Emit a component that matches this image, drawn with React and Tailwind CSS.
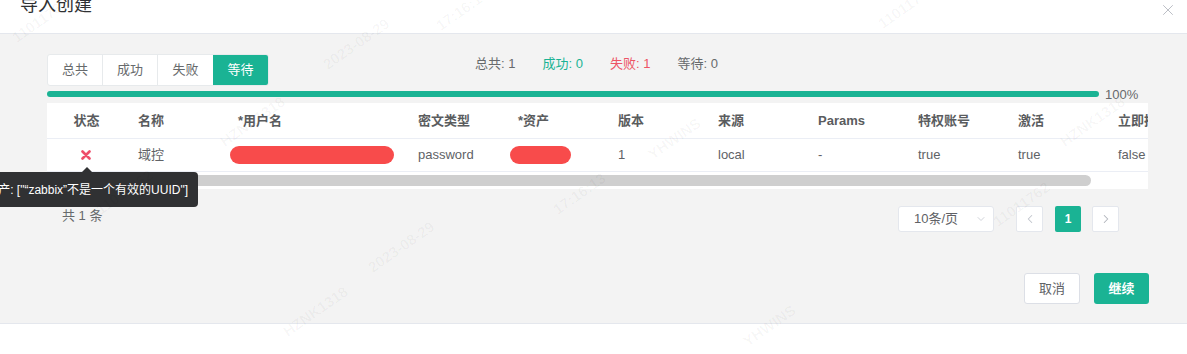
import { X, ChevronDown, ChevronLeft, ChevronRight } from "lucide-react";

const columns = [
  { key: "status", label: "状态", width: 79, center: true },
  { key: "name", label: "名称", width: 100 },
  { key: "username", label: "*用户名", width: 180 },
  { key: "secretType", label: "密文类型", width: 100 },
  { key: "asset", label: "*资产", width: 100 },
  { key: "version", label: "版本", width: 100 },
  { key: "source", label: "来源", width: 100 },
  { key: "params", label: "Params", width: 100 },
  { key: "privileged", label: "特权账号", width: 100 },
  { key: "active", label: "激活", width: 100 },
  { key: "push", label: "立即推送", width: 100 },
];

const row = {
  name: "域控",
  secretType: "password",
  version: "1",
  source: "local",
  params: "-",
  privileged: "true",
  active: "true",
  push: "false",
};

// faint diagonal watermark labels that sit over the dialog
const marks = [
  { t: "11011762", x: 14, y: 28 },
  { t: "2023-08-29", x: 325, y: 55 },
  { t: "17:16:13", x: 438, y: 16 },
  { t: "11011762", x: 880, y: 14 },
  { t: "HZNK1318", x: 222, y: 132 },
  { t: "YHWINS", x: 650, y: 145 },
  { t: "17:16:13", x: 555, y: 200 },
  { t: "11011762", x: 98, y: 200 },
  { t: "2023-08-29", x: 370, y: 258 },
  { t: "HZNK1318", x: 285, y: 322 },
  { t: "11011762", x: 995, y: 212 },
  { t: "HZNK1318", x: 1062, y: 132 },
  { t: "YHWINS", x: 745, y: 332 },
];

function Tabs() {
  const tabs = ["总共", "成功", "失败", "等待"];
  return (
    <div className="flex h-[32px] rounded-[3px] border border-[#e7eaec] bg-white overflow-hidden">
      {tabs.map((t, i) => (
        <div
          key={t}
          className={`w-[55px] flex items-center justify-center text-[13px] ${
            i === 3
              ? "bg-[#1ab394] text-white"
              : "text-[#676a6c] " + (i < 2 ? "border-r border-[#e7eaec]" : "")
          }`}
        >
          {t}
        </div>
      ))}
    </div>
  );
}

function Redacted({ w }) {
  return <div className={`h-[18px] rounded-full bg-[#f84b4b] ${w}`}></div>;
}

function cellPad(c) {
  if (c.center) return "flex justify-center";
  if (c.key === "username" || c.key === "asset") return "pl-[4px]";
  return "pl-[12px]";
}

export default function App() {
  return (
    <div
      className="relative w-[1187px] h-[354px] overflow-hidden bg-white"
      style={{ fontFamily: '"Liberation Sans", "Noto Sans CJK SC", sans-serif' }}
    >
      {/* Header */}
      <div className="h-[34px] border-b border-[#e4e7ed] relative">
        <div className="relative -top-[7px] pl-[20px] text-[18px] leading-[24px] text-[#303133]">
          导入创建
        </div>
        <X
          className="absolute left-[1159px] top-[1px] text-[#b4b8bf]"
          size={18}
          strokeWidth={1.2}
        />
      </div>

      {/* Body */}
      <div className="h-[290px] bg-[#f3f3f3] border-b border-[#e4e7ed] pt-[20px] pl-[47px]">
        <div className="flex items-start">
          <Tabs />
          <div className="ml-[206px] mt-[2px] flex gap-[27px] text-[13px] leading-[16px]">
            <span className="text-[#676a6c]">总共: 1</span>
            <span className="text-[#1ab394]">成功: 0</span>
            <span className="text-[#ed5565]">失败: 1</span>
            <span className="text-[#676a6c]">等待: 0</span>
          </div>
        </div>

        {/* Progress */}
        <div className="mt-[5px] flex items-center h-[6px]">
          <div className="w-[1052px] h-[6px] rounded-full bg-[#1ab394]"></div>
          <span className="ml-[6px] text-[13px] leading-none text-[#676a6c]">100%</span>
        </div>

        {/* Table */}
        <div className="relative mt-[6px] w-[1101px] bg-white overflow-hidden">
          <div className="flex h-[36px] border-b border-[#ebeef5] items-center whitespace-nowrap">
            {columns.map((c) => (
              <div
                key={c.key}
                className={`shrink-0 text-[13px] font-semibold text-[#5a5c5e] ${
                  c.center ? "text-center" : "pl-[12px]"
                }`}
                style={{ width: c.width }}
              >
                {c.label}
              </div>
            ))}
          </div>
          <div className="flex h-[33px] border-b border-[#ebeef5] items-center whitespace-nowrap">
            {columns.map((c) => (
              <div
                key={c.key}
                className={`shrink-0 text-[13px] text-[#606266] ${cellPad(c)}`}
                style={{ width: c.width }}
              >
                {c.key === "status" ? (
                  <svg width="10" height="10" viewBox="0 0 10 10" className="ml-[-1px]">
                    <path d="M1.5 1.5 L8.5 8.5 M8.5 1.5 L1.5 8.5" stroke="#ee4d6a" strokeWidth="2.6" strokeLinecap="round" />
                  </svg>
                ) : c.key === "username" ? (
                  <Redacted w="w-[164px]" />
                ) : c.key === "asset" ? (
                  <Redacted w="w-[61px]" />
                ) : (
                  row[c.key]
                )}
              </div>
            ))}
          </div>
          <div className="h-[17px] pt-[3px]">
            <div className="w-[1044px] h-[11px] rounded-full bg-[#cfcfcf]"></div>
          </div>
        </div>

        {/* Pagination */}
        <div className="w-[1101px] mt-[17px] flex items-center h-[26px]">
          <span className="ml-[15px] text-[13px] text-[#676a6c] -mt-[6px]">共 1 条</span>
          <div className="ml-auto flex items-center mr-[29px]">
            <div className="w-[96px] h-[26px] rounded-[3px] border border-[#e4e7ed] bg-white flex items-center pl-[15px] pr-[6px] text-[13px] text-[#606266]">
              <span>10条/页</span>
              <ChevronDown className="ml-auto text-[#c0c4cc]" size={12} strokeWidth={1.5} />
            </div>
            <div className="ml-[22px] w-[27px] h-[26px] rounded-[2px] border border-[#e4e7ed] bg-white flex items-center justify-center">
              <ChevronLeft size={14} className="text-[#c0c4cc]" strokeWidth={1.8} />
            </div>
            <div className="ml-[12px] w-[26px] h-[26px] rounded-[2px] bg-[#1ab394] flex items-center justify-center text-[12px] font-bold text-white">
              1
            </div>
            <div className="ml-[11px] w-[27px] h-[26px] rounded-[2px] border border-[#e4e7ed] bg-white flex items-center justify-center">
              <ChevronRight size={14} className="text-[#b0b4bb]" strokeWidth={1.8} />
            </div>
          </div>
        </div>

        {/* Actions */}
        <div className="w-[1102px] mt-[41px] flex justify-end gap-[14px]">
          <button className="w-[56px] h-[31px] rounded-[3px] border border-[#dcdfe6] bg-white text-[13px] text-[#606266]">
            取消
          </button>
          <button className="w-[55px] h-[31px] rounded-[3px] bg-[#1ab394] text-[13px] font-semibold text-white">
            继续
          </button>
        </div>
      </div>

      {/* Tooltip over the status cell */}
      <div className="absolute right-[989px] top-[172px] h-[35px] rounded-[4px] bg-[#303133] pl-[10px] pr-[10px] flex items-center whitespace-nowrap text-[12px] text-white">
        资产: ["“zabbix”不是一个有效的UUID"]
        <div className="absolute right-[106px] -top-[5px] w-0 h-0 border-l-[5px] border-r-[5px] border-b-[5px] border-l-transparent border-r-transparent border-b-[#303133]"></div>
      </div>

      {/* Watermark */}
      <div className="pointer-events-none absolute inset-0">
        {marks.map((m, i) => (
          <span
            key={i}
            className="absolute text-[15px] font-bold text-[#000000]/[0.035] -rotate-[35deg] origin-left whitespace-nowrap"
            style={{ left: m.x, top: m.y }}
          >
            {m.t}
          </span>
        ))}
      </div>
    </div>
  );
}
